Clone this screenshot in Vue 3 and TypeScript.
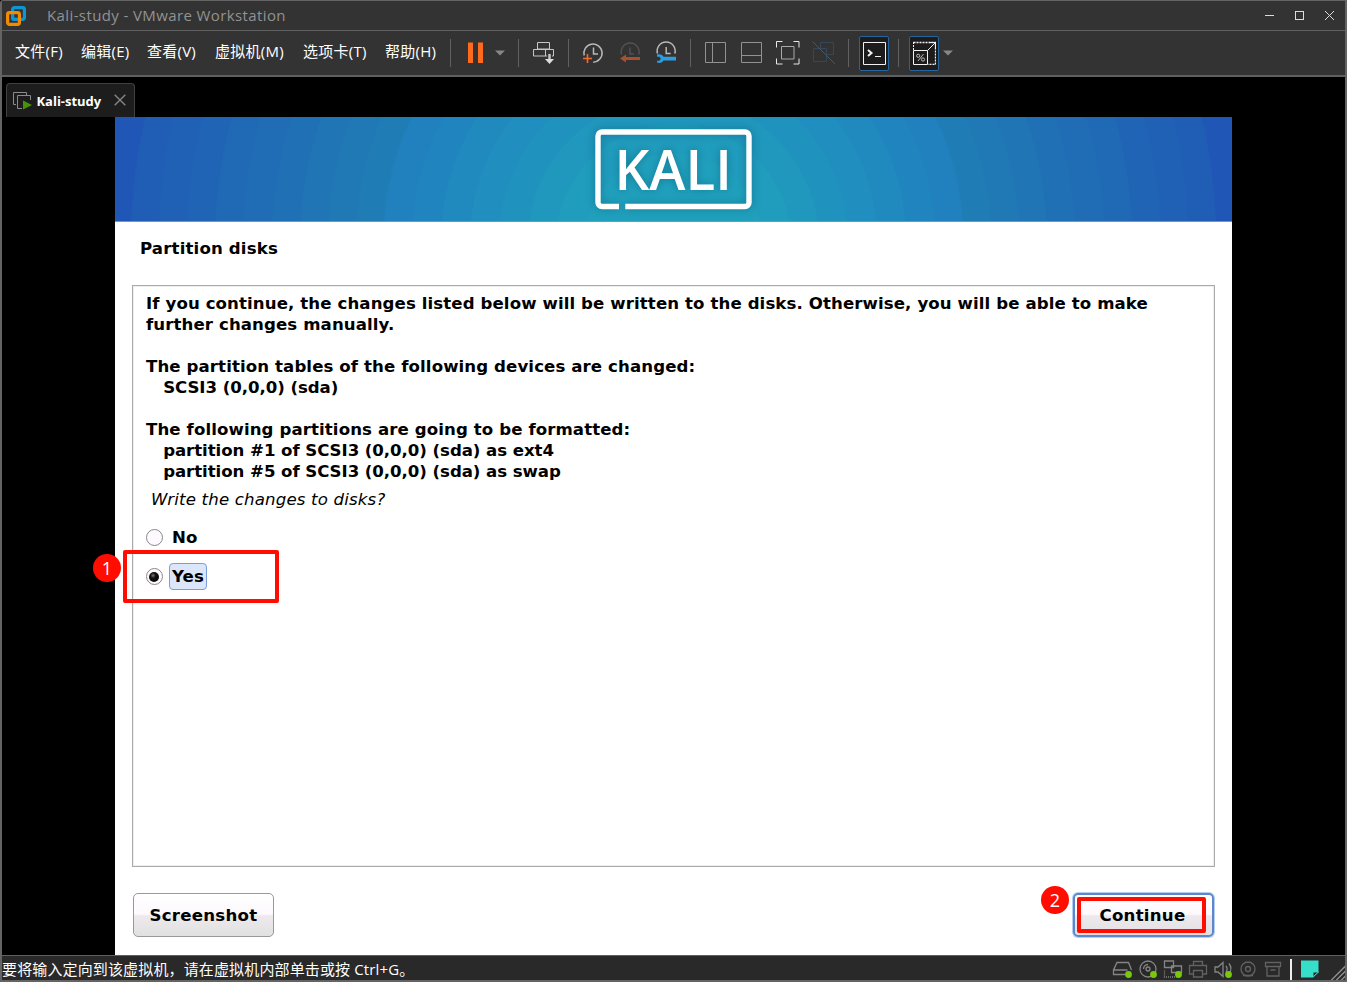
<script setup lang="ts">
import { ref } from 'vue'

const menus = ['文件(F)', '编辑(E)', '查看(V)', '虚拟机(M)', '选项卡(T)', '帮助(H)']
const answer = ref<'No' | 'Yes'>('Yes')
const message = [
  'If you continue, the changes listed below will be written to the disks. Otherwise, you will be able to make',
  'further changes manually.',
  '',
  'The partition tables of the following devices are changed:',
  '   SCSI3 (0,0,0) (sda)',
  '',
  'The following partitions are going to be formatted:',
  '   partition #1 of SCSI3 (0,0,0) (sda) as ext4',
  '   partition #5 of SCSI3 (0,0,0) (sda) as swap',
]
</script>

<template>
  <div class="window">
    <header class="titlebar">
      <svg class="logo" width="22" height="22" viewBox="0 0 22 22" fill="none" stroke-width="3.2">
        <rect x="7.6" y="2.6" width="11.8" height="11.8" rx="1.8" stroke="#0d95d4" />
        <rect x="2.6" y="7.6" width="11.8" height="11.8" rx="1.8" stroke="#f38b00" />
        <path d="M7.6 10.5V13a1.4 1.4 0 0 0 1.4 1.4h3" stroke="#0d95d4" />
      </svg>
      <span class="title">Kali-study - VMware Workstation</span>
      <svg class="controls" width="72" height="12" viewBox="0 0 72 12" fill="none" stroke="#dcdcdc" shape-rendering="crispEdges">
        <path d="M1 5.5h9M31.5 1.5h8v8h-8z" />
        <path d="M61 1l9 9M70 1l-9 9" shape-rendering="auto" />
      </svg>
    </header>

    <div class="toolbar">
      <nav class="menu"><span v-for="m in menus" :key="m">{{ m }}</span></nav>
      <div class="tools">
        <i class="sep"></i>
        <svg class="ic g12" viewBox="0 0 24 24"><path d="M5 1.500h5v20.500H5zM15 1.500h5v20.500h-5z" fill="#ff6a1c" /></svg>
        <svg class="caret g7" viewBox="0 0 12 24"><path d="M1 9.500h10l-5 5z" fill="#888" /></svg>
        <i class="sep g12"></i>
        <svg class="ic g13" viewBox="0 0 24 24" fill="none" stroke="#c6c6c6">
          <path d="M5.500 1.500h12v6.500h-12zM1.500 8.500h20v6.500h-20zM13.500 8.500v6.500" />
          <path d="M17.500 14v6" stroke="#333" stroke-width="5" />
          <path d="M17.500 13v6" stroke-width="2.500" /><path d="M13 18h9l-4.500 5z" fill="#ddd" stroke="none" />
        </svg>
        <i class="sep g12"></i>
        <svg class="ic g12" viewBox="0 0 24 24" fill="none" stroke="#b8b8b8" stroke-width="1.500">
          <path d="M3.200 14.500a9.100 9.100 0 1 1 9 6.700M12.500 6.500v6.500h4.500" />
          <path d="M2 17.500h9M6.500 13v9" stroke="#f36a2b" stroke-width="1.600" />
        </svg>
        <svg class="ic g13" viewBox="0 0 24 24" fill="none" stroke="#515151" stroke-width="1.500">
          <path d="M3.500 13.500a9 9 0 1 1 17.300 0M12 6.500v6.500h4" />
          <path d="M2 17.500l6-4v2.500h14v3H8v2.500z" fill="#a7502b" stroke="none" />
        </svg>
        <svg class="ic g12" viewBox="0 0 24 24" fill="none" stroke="#b8b8b8" stroke-width="1.500">
          <path d="M3.500 12.500a9 9 0 1 1 17.300 0M12.200 6v6.500h4.500" />
          <path d="M3 13.500c3.500-.8 5.500.5 6.500 2.300H22v3.700H9.500c-1.200 2.300-3.500 3-6.500 2v-1.700h2.500l1.300-2-1.300-2H3z" fill="#2c9ee0" stroke="none" />
        </svg>
        <i class="sep g12"></i>
        <svg class="ic g13" viewBox="0 0 24 24" fill="none" stroke="#929292"><path d="M1.500 1.500h20v20h-20zM8.500 1.500v20" /></svg>
        <svg class="ic g12" viewBox="0 0 24 24" fill="none" stroke="#929292"><path d="M1.500 1.500h20v20h-20zM1.500 14.500h20" /></svg>
        <svg class="ic g12" viewBox="0 0 24 24" fill="none" stroke="#e8e8e8">
          <path d="M.5 6.500v-6h6M17.500.5h5.500v6M23 17.500v5.500h-5.500M6.500 23h-6v-5.500" /><path d="M5.500 5.500h12.500v12.500H5.500z" stroke="#aaa" />
        </svg>
        <svg class="ic g12" viewBox="0 0 24 24" fill="none" stroke="#34485a">
          <path d="M8.500 7.500v-6h13v12h-6M1.500 7.500h13v13h-13z" /><path d="M.5.5L23 23" stroke="#45586a" />
        </svg>
        <i class="sep g12"></i>
        <div class="toggle g10">
          <svg viewBox="0 0 24 24" fill="none" stroke="#f1f1f1"><path d="M1.500 1.500h22v22h-22z" /><path d="M6 9l3.500 3L6 15" stroke-width="2" /><path d="M13 15.500h6" /></svg>
        </div>
        <i class="sep g9"></i>
        <div class="toggle g10">
          <svg viewBox="0 0 24 24" fill="none" stroke="#f1f1f1">
            <path d="M1.500 1.500h22v22H16" stroke-dasharray="2 1" stroke-width="1.300" /><path d="M1.500 9V1" stroke-dasharray="2 1" />
            <path d="M1.500 9.500h14v14h-14zM15.500 9.500L23 2M18 1.500h5.500v5.500" />
            <path d="M6 20l5.500-7" stroke="#bbb" /><circle cx="6.200" cy="14.800" r="1.600" stroke="#bbb" /><circle cx="11" cy="18.500" r="1.600" stroke="#bbb" />
          </svg>
        </div>
        <svg class="caret g3" viewBox="0 0 12 24"><path d="M1 9.500h10l-5 5z" fill="#888" /></svg>
      </div>
    </div>

    <div class="tabs">
      <div class="tab">
        <svg width="20" height="20" viewBox="0 0 20 20" fill="none" stroke="#8b8b8b">
          <path d="M3 13.500H.5V1.500h13V4M9 17.500H4.500v-13h13V9" /><path d="M10 9.500l9 4.500-9 4.500z" fill="#469404" stroke="none" />
        </svg>
        <b>Kali-study</b>
        <svg class="x" width="12" height="12" viewBox="0 0 12 12" stroke="#858585" stroke-width="1.400"><path d="M.7.7l10.600 10.600M11.300.7L.7 11.300" /></svg>
      </div>
    </div>

    <main class="stage">
      <section class="installer">
        <div class="banner">
          <svg width="180" height="104" viewBox="0 0 180 104">
            <g class="brand">
              <path d="M37 89.500H20a4 4 0 0 1-4-4V19a4 4 0 0 1 4-4h143a4 4 0 0 1 4 4v66.500a4 4 0 0 1-4 4H43.300" fill="none" stroke="#fff" stroke-width="5.400" />
              <text x="32.400" y="72.600" textLength="117.500" lengthAdjust="spacingAndGlyphs">KALI</text>
            </g>
          </svg>
        </div>
        <h1>Partition disks</h1>
        <div class="panel">
          <p v-for="(line, i) in message" :key="i" class="line" :class="{ item: line.startsWith(' ') }">{{ line }}</p>
          <p class="question">Write the changes to disks?</p>
          <div class="choice" @click="answer = 'No'"><span class="radio" :class="{ on: answer === 'No' }"></span><span class="label" :class="{ focus: answer === 'No' }">No</span></div>
          <div class="choice" @click="answer = 'Yes'"><span class="radio" :class="{ on: answer === 'Yes' }"></span><span class="label" :class="{ focus: answer === 'Yes' }">Yes</span></div>
        </div>
        <div class="actions">
          <button>Screenshot</button>
          <button class="primary">Continue</button>
        </div>
      </section>
      <i class="mark m1"></i><span class="num n1">1</span>
      <i class="mark m2"></i><span class="num n2">2</span>
    </main>

    <footer class="status">
      <span class="hint">要将输入定向到该虚拟机，请在虚拟机内部单击或按 Ctrl+G。</span>
      <svg width="233" height="24" viewBox="0 0 233 24" fill="none" stroke="#858585" stroke-width="1.300">
        <path d="M13 18.500H1.500V14L5 6.500h11.500l3 7.500M1.500 14h14" />
        <circle cx="36" cy="13" r="8" /><circle cx="36" cy="13" r="2" /><path d="M31.500 13a4.500 4.500 0 0 1 4.500-4.500" />
        <path d="M52.500 5h9v6.500h-9zM59.500 10h10v6.500h-10z" /><path d="M52.500 14.500v6.500h12" stroke-dasharray="1 1" />
        <g stroke="#626262"><path d="M81.500 9.500v-4h9v4M81.500 18h-4V9.500h17V18h-4M81.500 14.500h9v6.500h-9z" /></g>
        <path d="M103 11h3l5-4.500v14l-5-4.500h-3zM114 10c1.500 2 1.500 4 0 6M117 7.500c2.300 3 2.300 7 0 10" />
        <g stroke="#626262"><circle cx="136" cy="13" r="7" /><circle cx="136" cy="13" r="2.500" /><path d="M131 19.500h10M153.500 6.500h15v4h-15zM155 10.500v9.500h12v-9.500M158.500 14h5" /></g>
        <g fill="#79c80e" stroke="none"><circle cx="16.500" cy="18.500" r="3.400" /><circle cx="41.500" cy="18.500" r="3.400" /><circle cx="66.500" cy="18.500" r="3.400" /><circle cx="116.500" cy="18.500" r="3.400" /></g>
        <path d="M179 3v21" stroke="#eee" stroke-width="2" />
        <path d="M189 4.500h17.500V16l-5.500 5.500h-12z" fill="#35dfc9" stroke="none" /><path d="M201 21v-5h5.500z" fill="#222" stroke="#35dfc9" stroke-width="1" />
        <path d="M219 24.500l15-15M224 24.500l10-10M229 24.500l5-5" stroke="#939393" />
      </svg>
    </footer>
  </div>
</template>

<style>
html, body { margin: 0; background: #000; overflow: hidden; }
</style>

<style scoped>
* { box-sizing: border-box; }
.window { width: 1347px; height: 982px; background: #000; border: solid #646464; border-width: 1px 2px 2px; display: flex; flex-direction: column; overflow: hidden; border-radius: 3px 0 0; font-family: "Open Sans", "Noto Sans CJK SC", sans-serif; }
.titlebar { height: 30px; flex: none; background: #333; border-bottom: 1px solid #606060; display: flex; align-items: center; padding-left: 3px; }
.logo { flex: none; }
.title { margin-left: 20px; font-size: 15px; line-height: 20px; letter-spacing: .39px; color: #929292; padding-bottom: 2px; }
.controls { margin-left: auto; margin-right: 9px; }
.toolbar { height: 46px; flex: none; background: #333; border-bottom: 2px solid #606060; display: flex; align-items: center; }
.menu { width: 448px; padding: 0 0 4px 13px; display: grid; grid-template-columns: 66px 66px 68px 88px 82px 60px; font-size: 15px; line-height: 22px; letter-spacing: .25px; color: #fff; white-space: nowrap; }
.tools { display: flex; align-items: center; }
.tools svg, .tools i { flex: none; display: block; }
.sep { width: 1px; height: 28px; background: #606060; }
.ic { width: 24px; height: 24px; }
.caret { width: 12px; height: 24px; }
.toggle { width: 30px; height: 35px; border: 1px solid #23659c; border-radius: 2px; background: #1c1c1c; display: flex; align-items: center; justify-content: center; }
.toggle svg { width: 24px; height: 24px; }
.g3 { margin-left: 3px; } .g7 { margin-left: 7px; } .g9 { margin-left: 9px; } .g10 { margin-left: 10px; } .g12 { margin-left: 12px; } .g13 { margin-left: 13px; }
.tabs { height: 40px; flex: none; padding: 6px 0 0 4px; }
.tab { width: 129px; height: 34px; background: #1d1d1d; border: 1px solid #414141; border-bottom: 0; border-radius: 4px 4px 0 0; display: flex; align-items: center; padding-left: 6px; }
.tab b { margin-left: 3.500px; width: 77.500px; font-size: 13px; letter-spacing: -.02px; color: #fff; white-space: nowrap; }
.tab .x { margin-top: -2px; }
.stage { position: relative; height: 838px; flex: none; padding-left: 113px; }
.installer { width: 1117px; height: 838px; background: #fff; color: #000; font-family: "DejaVu Sans", sans-serif; font-size: 16.600px; letter-spacing: .1px; }
.banner {
  height: 105px;
  padding-left: 467px;
  border-bottom: 1px solid #5aa0cc;
  background: radial-gradient(circle at 50% 125px,
    #20a0bd 88px, #209cbd 89px 117px, #2097bd 118px 145px, #2092be 146px 174px, #208ebe 175px 203px,
    #208abe 204px 232px, #2085bf 233px 261px, #2081be 262px 289px, #207cb5 291px 317px, #2079b5 318px 345px,
    #2075b5 346px 373px, #2070b5 374px 401px, #206db5 402px 430px, #206ab5 431px 458px, #2064b5 459px 486px,
    #2061b5 487px 514px, #205eb5 515px 542px, #2057b6 543px);
}
.brand { filter: drop-shadow(0 0 4px #05556e80); }
.brand text { font: 600 55.500px "Open Sans", sans-serif; fill: #fff; letter-spacing: 0; }
h1 { margin: 0; padding: 16px 25px 0; height: 63px; font-size: 16.600px; line-height: 21px; font-weight: 700; letter-spacing: .15px; }
.panel { margin: 0 17px; height: 582px; border: 1px solid #aaa; box-shadow: inset 0 0 0 1px #eee; padding: 7px 13px; }
p { margin: 0; white-space: pre; }
.line { height: 21px; line-height: 21px; font-weight: 700; }
.item { letter-spacing: -.06px; }
.question { margin: 7px 0 15px 5px; height: 21px; line-height: 21px; font-style: italic; letter-spacing: .17px; }
.choice { height: 27px; display: flex; align-items: center; font-weight: 700; margin-bottom: 12px; margin-left: -.5px; }
.question + .choice { margin-top: -1px; }
.radio { width: 17px; height: 17px; border: 1.500px solid #888; border-radius: 50%; background: #fffaff; display: grid; place-items: center; }
.radio.on::after { content: ""; width: 10px; height: 10px; border-radius: 50%; background: radial-gradient(circle at 40% 35%, #777 0, #111 30%, #000); }
.label { margin-left: 6.500px; height: 27px; line-height: 26px; padding: 0 2px; border: 1px solid transparent; border-radius: 4px; }
.focus { background: #dbe6fa; border-color: #7d9dd5; }
.actions { display: flex; justify-content: space-between; padding: 26px 18px 0; }
button { width: 141px; height: 44px; padding: 0; border: 1.500px solid #999; border-radius: 5px; background: linear-gradient(#fff 0, #fdf9fd 48%, #eee9ed 52%, #e1e1e1); font: 700 16.600px "DejaVu Sans", sans-serif; letter-spacing: .25px; color: #000; }
.primary { border: 2px solid #5d86cb; box-shadow: 0 0 0 1px #b4cdf3; padding-right: 2px; }
.mark { position: absolute; border: 4px solid #ff0d00; border-radius: 2px; }
.m1 { left: 121px; top: 433px; width: 156px; height: 53px; }
.m2 { left: 1075px; top: 780px; width: 129px; height: 36px; }
.num { position: absolute; width: 28px; height: 28px; border-radius: 50%; background: #ff0d00; color: #fff; font-size: 18px; line-height: 28px; text-align: center; }
.n1 { left: 91px; top: 437px; }
.n2 { left: 1039px; top: 769px; }
.status { height: 25px; flex: none; background: #292929; border-top: 1px solid #606060; display: flex; align-items: center; justify-content: space-between; color: #fff; font-size: 15px; white-space: nowrap; }
.hint { line-height: 24px; letter-spacing: .14px; padding-top: 1px; }
</style>
